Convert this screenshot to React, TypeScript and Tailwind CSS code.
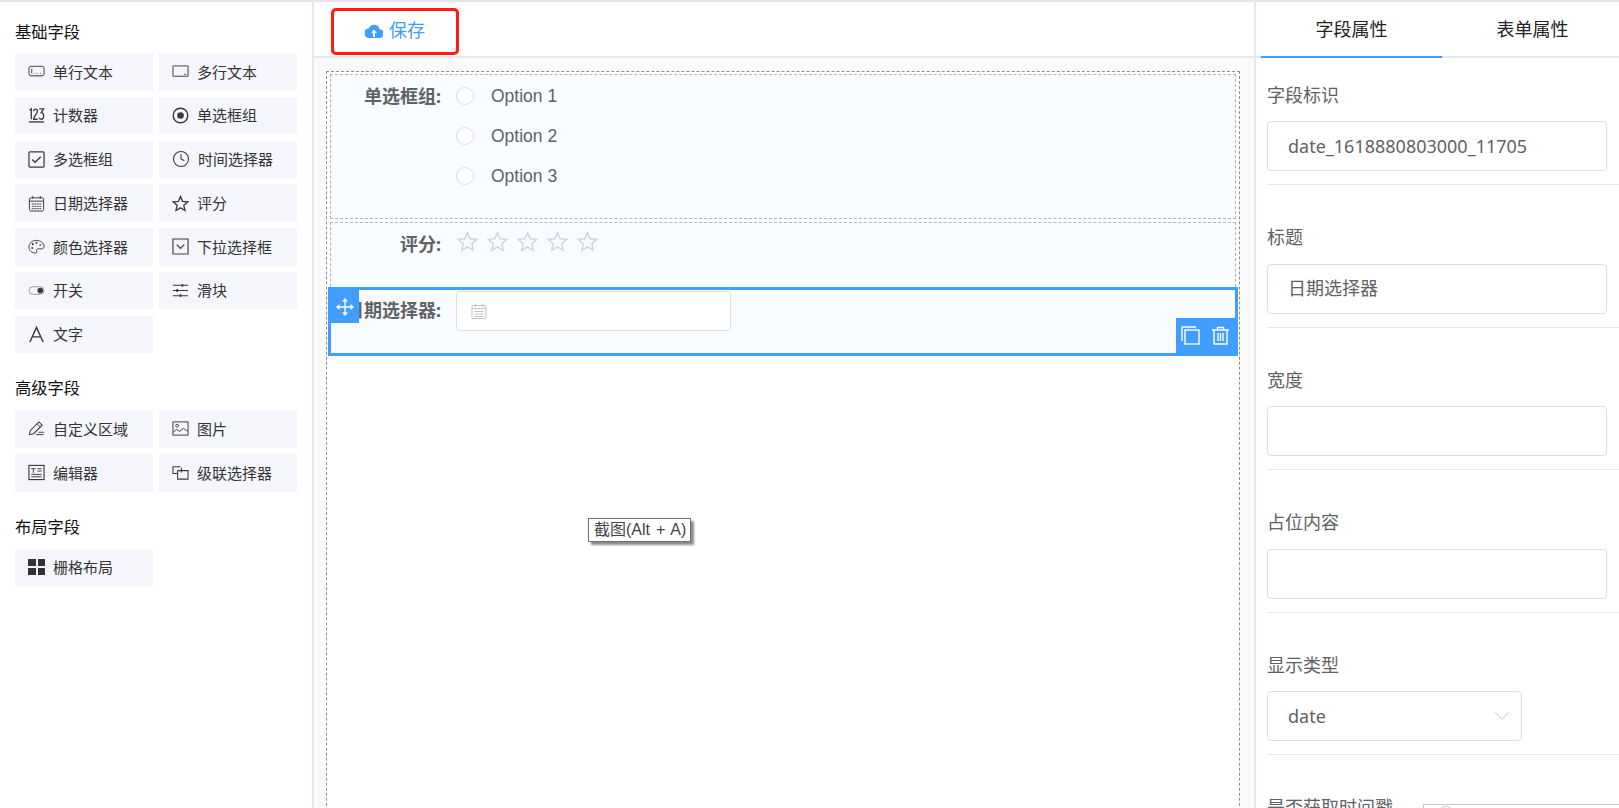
import { ChevronDown, Clock } from 'lucide-react';
import type { ReactNode } from 'react';

const svg = (children: ReactNode) => (
  <svg viewBox="0 0 18 18" className="h-[17px] w-[17px] shrink-0 text-[#3a3a3a]" fill="none" stroke="currentColor">
    {children}
  </svg>
);

const icons: Record<string, ReactNode> = {
  input: svg(
    <>
      <rect x="1" y="3.500" width="16" height="10" rx="2" />
      <path d="M4 6v5M7 11h.8M10 11h.8M13 11h.8" />
      <path d="M2.500 14.500h13" stroke="#b5b5b5" />
    </>,
  ),
  textarea: svg(
    <>
      <path d="M1 3h16v11H1z" />
      <path d="M1 3h16M1 3v11" stroke="#9a9a9a" strokeWidth="1.500" />
      <path d="M13 12h2" />
    </>,
  ),
  number: svg(
    <>
      <path d="M1.500 3.500l2-1.500v11" strokeWidth="1.400" />
      <path d="M6 4.500c0-3 4-3 4 0 0 2.500-4 4.500-4 8.500h4.200" strokeWidth="1.400" />
      <path d="M12 2h4.500l-2.500 4c3.500 0 3.500 7-.2 7-1 0-1.800-.6-1.800-1.500" strokeWidth="1.400" />
      <path d="M1 15.800h16" strokeWidth="1.400" />
    </>,
  ),
  radio: svg(
    <>
      <circle cx="9" cy="9" r="7.700" strokeWidth="1.500" />
      <circle cx="9" cy="9" r="3.500" fill="currentColor" stroke="none" />
    </>,
  ),
  checkbox: svg(
    <>
      <rect x="1" y="1" width="16" height="16" rx="1" strokeWidth="1.300" />
      <path d="M4.500 9l3 3 6-6" strokeWidth="1.500" />
    </>,
  ),
  time: <Clock className="h-[18px] w-[18px] shrink-0 text-[#3a3a3a]" strokeWidth={1.4} />,
  date: svg(
    <>
      <rect x="1.500" y="3" width="15" height="14" rx="1.500" />
      <path d="M1.500 6.500h15M5 1v3M13 1v3" />
      <path d="M4 9.500h10M4 12h10M4 14.500h10" strokeDasharray="2 .7" />
    </>,
  ),
  rate: svg(<path d="M9 1.500l2.200 5.200 5.600.5-4.300 3.700 1.300 5.500L9 13.600 4.200 16.400l1.300-5.500L1.200 7.200l5.600-.5z" strokeWidth="1.400" strokeLinejoin="miter" />),
  color: svg(
    <>
      <path d="M9 2.500C4.500 2.500 1 5.500 1 9.500s3.500 6.500 7 6.500c1.500 0 1.500-1.500 1-2.500-.5-1.200.5-2 2-2h3c2 0 3-1 3-3 0-3-4-6-8-6z" />
      <circle cx="5" cy="6.500" r="1.100" fill="currentColor" stroke="none" />
      <circle cx="9" cy="5" r="1.100" fill="currentColor" stroke="none" />
      <circle cx="4.500" cy="10.500" r="1.100" fill="currentColor" stroke="none" />
      <circle cx="13" cy="7.500" r="1.100" fill="#a3643a" stroke="none" />
    </>,
  ),
  select: svg(
    <>
      <path d="M1 1h16v16H1z" strokeWidth="1.200" />
      <path d="M5 7l4 4 4-4" strokeWidth="1.400" />
      <path d="M1 17h16" stroke="#a0a0a0" strokeWidth="1.400" />
    </>,
  ),
  switch: svg(
    <>
      <rect x="1" y="5" width="16" height="8" rx="4" stroke="#9a9a9a" />
      <circle cx="13" cy="9" r="3" fill="currentColor" stroke="none" />
    </>,
  ),
  slider: svg(
    <>
      <path d="M1 3.500h16M1 9h16M1 14.500h16" strokeWidth="1.200" />
      <path d="M11 2v3M5.500 7.500v3M9 13v3" strokeWidth="1.800" />
    </>,
  ),
  text: svg(<path d="M2 17L9 1.500 16 17M4.500 11.500h9" strokeWidth="1.500" />),
  custom: svg(
    <>
      <path d="M1.500 15.500l1-4.500L11.500 2l3.500 3.500-9 9z" strokeWidth="1.100" />
      <path d="M9.500 4l3.500 3.500M8.500 15.500h8M11 13h6" />
    </>,
  ),
  image: svg(
    <>
      <rect x="1" y="2" width="16" height="14" />
      <circle cx="5.500" cy="6" r="1.500" />
      <path d="M1 13l4-3 3 2 4-3 5 3" />
    </>,
  ),
  editor: svg(
    <>
      <rect x="1" y="1.500" width="16" height="15" strokeWidth="1.200" />
      <path d="M3.500 5h4.500M5.700 5v4.500M10 5h4.500M10 7.500h4.500M3.500 11h11M3.500 13.500h11" />
    </>,
  ),
  cascader: svg(
    <>
      <path d="M9 3H1v7h5" strokeWidth="1.100" />
      <path d="M6 7h11v9H6z" strokeWidth="1.100" />
      <path d="M10 4v5" strokeWidth="1.100" />
    </>,
  ),
  grid: (
    <div className="grid h-[16px] w-[17px] shrink-0 grid-cols-2 gap-[2px]">
      <span className="bg-[#333]" />
      <span className="bg-[#333]" />
      <span className="bg-[#333]" />
      <span className="bg-[#333]" />
    </div>
  ),
};

const basicFields = [
  ['单行文本', 'input'],
  ['多行文本', 'textarea'],
  ['计数器', 'number'],
  ['单选框组', 'radio'],
  ['多选框组', 'checkbox'],
  ['时间选择器', 'time'],
  ['日期选择器', 'date'],
  ['评分', 'rate'],
  ['颜色选择器', 'color'],
  ['下拉选择框', 'select'],
  ['开关', 'switch'],
  ['滑块', 'slider'],
  ['文字', 'text'],
];

const advancedFields = [
  ['自定义区域', 'custom'],
  ['图片', 'image'],
  ['编辑器', 'editor'],
  ['级联选择器', 'cascader'],
];

function FieldGroup({
  title,
  fields,
  className,
  gridClass = 'mt-[10px] gap-y-[6.250px]',
}: {
  title: string;
  fields: string[][];
  className?: string;
  gridClass?: string;
}) {
  return (
    <div className={className}>
      <h3 className="h-[22px] text-[16.250px] leading-[22px] font-normal text-[#111]">{title}</h3>
      <div className={`grid grid-cols-[138px_138px] gap-x-[6px] ${gridClass}`}>
        {fields.map(([name, icon]) => (
          <div key={name} className="flex h-[37.500px] items-center gap-[8px] bg-[#f4f6fc] pl-[13px] text-[15px] text-[#333]">
            {icons[icon]}
            <span>{name}</span>
          </div>
        ))}
      </div>
    </div>
  );
}

function Sidebar() {
  return (
    <aside className="w-[314px] shrink-0 border-r-2 border-[#e4e7ed] bg-white pt-[19px] pl-[15px]">
      <FieldGroup title="基础字段" fields={basicFields} />
      <FieldGroup title="高级字段" fields={advancedFields} className="mt-[24px]" gridClass="mt-[11px] gap-y-[6.500px]" />
      <FieldGroup title="布局字段" fields={[['栅格布局', 'grid']]} className="mt-[24px]" gridClass="mt-[11px]" />
    </aside>
  );
}

function Toolbar() {
  return (
    <div className="flex h-[56px] items-start border-b-2 border-[#e4e7ed] bg-white pt-[6px] pl-[17px]">
      <button className="flex h-[47px] w-[128px] items-center justify-center gap-[6px] rounded-[5px] border-[3px] border-[#ff1a12] pb-[2px] text-[18px] text-[#409eff]">
        <svg viewBox="0 0 18 14" className="h-[14px] w-[18px]">
          <path
            fill="#409eff"
            d="M14.500 5.200A5.500 5.500 0 0 0 4 4.300 4.800 4.800 0 0 0 4.300 14h10.200a4.400 4.400 0 0 0 0-8.800z"
          />
          <path fill="#fff" d="M9 5.500l3 3.300h-2V13H8V8.800H6z" />
        </svg>
        保存
      </button>
    </div>
  );
}

function Label({ children, className }: { children: ReactNode; className?: string }) {
  return (
    <div className={`w-[125px] shrink-0 pr-[15px] text-right text-[18px] font-bold whitespace-nowrap text-[#606266] ${className}`}>
      {children}
    </div>
  );
}

function RateStar() {
  return (
    <svg viewBox="0 0 22 22" className="h-[21px] w-[21px]" fill="none" stroke="#c9d5e3" strokeWidth="1.500">
      <path d="M11 1.800l2.800 6.300 6.800.7-5.100 4.600 1.500 6.800L11 16.700l-6 3.500 1.500-6.800L1.400 8.800l6.800-.7z" />
    </svg>
  );
}

function Canvas() {
  return (
    <div className="min-h-0 flex-1 overflow-hidden bg-[#fafafa] pt-[13px] pr-[14px] pl-[12px]">
      <div className="h-[800px] border border-dashed border-[#8f8f8f] bg-white px-[3px] pt-[2px]">
        <div className="h-[145px] border border-dashed border-[#b5b5b5] bg-[#f8fbff] pt-[9px]">
          <div className="flex">
            <Label className="leading-[24px]">单选框组:</Label>
            <div className="flex flex-col gap-[16px]">
              {['Option 1', 'Option 2', 'Option 3'].map((o) => (
                <div
                  key={o}
                  className="flex h-[24px] items-center gap-[17px] text-[17.500px] text-[#606266]"
                  style={{ fontFamily: '"Liberation Sans", sans-serif' }}
                >
                  <span className="h-[18px] w-[18px] rounded-full border border-[#dcdfe6] bg-white" />
                  {o}
                </div>
              ))}
            </div>
          </div>
        </div>
        <div className="mt-[3px] h-[65px] border-x border-t border-dashed border-[#b5b5b5] bg-[#f8fbff] pt-[9px]">
          <div className="flex">
            <Label className="leading-[24px]">评分:</Label>
            <div className="-mt-[1px] ml-[1px] flex gap-[9px]">
              {[0, 1, 2, 3, 4].map((i) => (
                <RateStar key={i} />
              ))}
            </div>
          </div>
        </div>
        <div className="relative -mx-[2px] h-[69px] border-[3px] border-[#409eff] bg-[#f8fbff] pt-[1px]">
          <div className="flex items-start">
            <Label className="leading-[38px]">日期选择器:</Label>
            <div className="flex h-[40px] w-[275px] items-center rounded-[4px] border border-[#dcdfe6] bg-white pl-[14px]">
              <svg viewBox="0 0 16 16" className="h-[16px] w-[16px]" fill="none" stroke="#c0c4cc">
                <rect x="1" y="2.500" width="14" height="13" rx="1" />
                <path d="M1 5.500h14M4.500 1v3M11.500 1v3M3.500 8.500h9M3.500 11h9M3.500 13.500h9" />
              </svg>
            </div>
          </div>
          <div className="absolute top-0 left-0 flex h-[33px] w-[28px] items-center justify-center bg-[#409eff]">
            <svg viewBox="0 0 18 18" className="h-[18px] w-[18px]" fill="#fff">
              <path d="M9 0l3 3.500H6zM9 18l3-3.500H6zM0 9l3.500-3v6zM18 9l-3.500-3v6z" />
              <path d="M9 3v12M3 9h12" stroke="#fff" strokeWidth="1.400" />
            </svg>
          </div>
          <div className="absolute right-0 bottom-0 flex h-[35px] w-[59px] items-center justify-center gap-[11px] bg-[#409eff]">
            <svg viewBox="0 0 19 19" className="h-[19px] w-[19px]" fill="none" stroke="#fff" strokeWidth="1.400">
              <path d="M1 15V1h14" />
              <rect x="4" y="4" width="14" height="14" />
            </svg>
            <svg viewBox="0 0 19 19" className="h-[19px] w-[19px]" fill="none" stroke="#fff" strokeWidth="1.400">
              <path d="M1 4h17M6.500 4V1.500h6V4M3 4v14h13V4" />
              <path d="M7 7v8M9.500 7v8M12 7v8" />
            </svg>
          </div>
        </div>
      </div>
    </div>
  );
}

function Field({ label, value, narrow, last }: { label: string; value?: string; narrow?: boolean; last?: boolean }) {
  return (
    <div className="h-[142.500px]">
      <div className="flex h-[63px] items-center pt-[11px] text-[18px] text-[#606266]">{label}</div>
      {!last && (
        <>
          <div
            className={`flex h-[50px] items-center justify-between rounded-[4px] border border-[#dcdfe6] bg-white pl-[20px] text-[18px] text-[#606266] ${
              narrow ? 'w-[255px] pr-[6px]' : 'w-[340px] pr-[16px]'
            }`}
          >
            {value}
            {narrow && <ChevronDown className="h-[26px] w-[26px] text-[#c0c4cc]" strokeWidth={0.9} />}
          </div>
          <div className="mt-[13px] border-t border-[#e4e7ed]" />
        </>
      )}
    </div>
  );
}

function Properties() {
  return (
    <aside className="w-[365px] shrink-0 overflow-hidden border-l-2 border-[#e4e7ed] bg-white">
      <div className="flex h-[56px] border-b-2 border-[#e4e7ed] pl-[5px] text-[18px] text-[#222]">
        <div className="-mb-[2px] flex h-[56px] w-[181px] shrink-0 items-center justify-center border-b-2 border-[#409eff]">字段属性</div>
        <div className="flex h-[54px] w-[181px] shrink-0 items-center justify-center">表单属性</div>
      </div>
      <div className="relative pl-[11px]">
        <Field label="字段标识" value="date_1618880803000_11705" />
        <Field label="标题" value="日期选择器" />
        <Field label="宽度" />
        <Field label="占位内容" />
        <Field label="显示类型" value="date" narrow />
        <Field label="是否获取时间戳" last />
        <div className="absolute top-[746px] left-[167px] h-[40px] w-[240px] border border-[#c8c8c8] bg-white pt-[1px] pl-[14px]">
          <div className="h-[16px] w-[16px] rounded-full border border-[#c8c8c8]" />
        </div>
      </div>
    </aside>
  );
}

export default function App() {
  return (
    <div
      className="relative flex h-[808px] w-[1619px] overflow-hidden border-t-2 border-[#e4e4e4]"
      style={{ fontFamily: '"Noto Sans", "Noto Sans CJK SC", sans-serif' }}
    >
      <Sidebar />
      <main className="flex min-w-0 flex-1 flex-col">
        <Toolbar />
        <Canvas />
      </main>
      <Properties />
      <div
        className="absolute top-[516px] left-[588px] w-[103px] border border-[#707070] bg-white pl-[5px] text-[16px] leading-[22px] [word-spacing:1.500px] whitespace-nowrap text-[#444] shadow-[3px_3px_2px_rgba(0,0,0,0.45)]"
        style={{ fontFamily: '"Liberation Sans", "Noto Sans CJK SC", sans-serif' }}
      >
        截图(Alt + A)
      </div>
    </div>
  );
}
